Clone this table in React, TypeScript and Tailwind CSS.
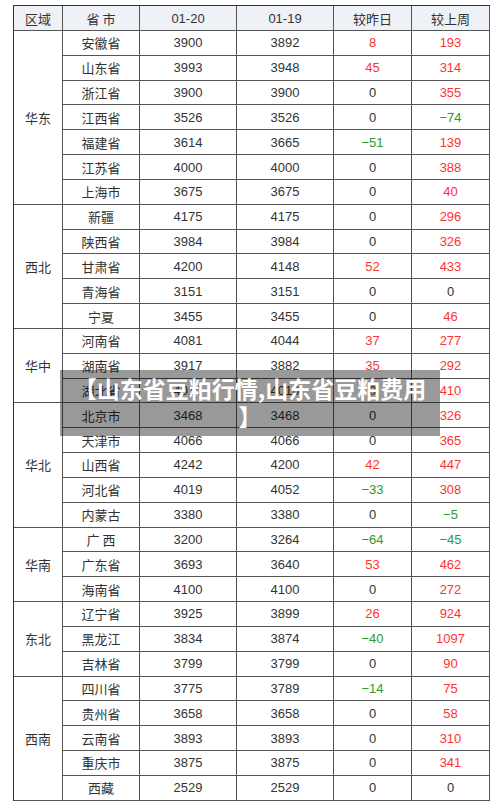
import React from "react";

type Row = [string, string, string, string, string];

const groups: { region: string; rows: Row[] }[] = [
  {
    region: "华东",
    rows: [
      ["安徽省", "3900", "3892", "8", "193"],
      ["山东省", "3993", "3948", "45", "314"],
      ["浙江省", "3900", "3900", "0", "355"],
      ["江西省", "3526", "3526", "0", "-74"],
      ["福建省", "3614", "3665", "-51", "139"],
      ["江苏省", "4000", "4000", "0", "388"],
      ["上海市", "3675", "3675", "0", "40"],
    ],
  },
  {
    region: "西北",
    rows: [
      ["新疆", "4175", "4175", "0", "296"],
      ["陕西省", "3984", "3984", "0", "326"],
      ["甘肃省", "4200", "4148", "52", "433"],
      ["青海省", "3151", "3151", "0", "0"],
      ["宁夏", "3455", "3455", "0", "46"],
    ],
  },
  {
    region: "华中",
    rows: [
      ["河南省", "4081", "4044", "37", "277"],
      ["湖南省", "3917", "3882", "35", "292"],
      ["湖北省", "4010", "4010", "0", "410"],
    ],
  },
  {
    region: "华北",
    rows: [
      ["北京市", "3468", "3468", "0", "326"],
      ["天津市", "4066", "4066", "0", "365"],
      ["山西省", "4242", "4200", "42", "447"],
      ["河北省", "4019", "4052", "-33", "308"],
      ["内蒙古", "3380", "3380", "0", "-5"],
    ],
  },
  {
    region: "华南",
    rows: [
      ["广 西", "3200", "3264", "-64", "-45"],
      ["广东省", "3693", "3640", "53", "462"],
      ["海南省", "4100", "4100", "0", "272"],
    ],
  },
  {
    region: "东北",
    rows: [
      ["辽宁省", "3925", "3899", "26", "924"],
      ["黑龙江", "3834", "3874", "-40", "1097"],
      ["吉林省", "3799", "3799", "0", "90"],
    ],
  },
  {
    region: "西南",
    rows: [
      ["四川省", "3775", "3789", "-14", "75"],
      ["贵州省", "3658", "3658", "0", "58"],
      ["云南省", "3893", "3893", "0", "310"],
      ["重庆市", "3875", "3875", "0", "341"],
      ["西藏", "2529", "2529", "0", "0"],
    ],
  },
];

const spanClass: Record<number, string> = {
  3: "row-span-3",
  5: "row-span-5",
  7: "row-span-7",
};

const cjk = "font-['Noto_Sans_CJK_SC','Noto_Sans',sans-serif]";
const num = "font-['Liberation_Sans','Arial',sans-serif]";
const cell =
  "flex items-center justify-center border-r border-b border-[#555] text-[13px] leading-none";

function colorFor(v: string) {
  if (v === "0") return "text-[#333]";
  if (v.startsWith("-")) return "text-[#2e9a2e]";
  return "text-[#ff3333]";
}

function fmt(v: string) {
  return v.replace("-", "\u2212");
}

export default function App() {
  return (
    <div className="relative w-[500px] h-[807px] bg-white overflow-hidden">
      <div className="ml-[13px] mt-[5px] w-[477px] grid grid-cols-[49px_77px_97px_97px_78px_78px] grid-rows-[25px] auto-rows-[24.84px] border-l border-t border-[#333]">
        {["区域", "省 市", "01-20", "01-19", "较昨日", "较上周"].map((h, i) => (
          <div
            key={h}
            className={`${cell} text-[#333] whitespace-pre bg-[#eef2f6] ${i >= 2 && i <= 3 ? num : cjk}`}
          >
            {h}
          </div>
        ))}
        {groups.map((g) => (
          <React.Fragment key={g.region}>
            <div className={`${cell} text-[#333] ${cjk} ${spanClass[g.rows.length]}`}>
              {g.region}
            </div>
            {g.rows.map((r) => (
              <React.Fragment key={r[0]}>
                <div className={`${cell} text-[#333] ${cjk} whitespace-pre`}>{r[0]}</div>
                <div className={`${cell} text-[#333] ${num}`}>{r[1]}</div>
                <div className={`${cell} text-[#333] ${num}`}>{r[2]}</div>
                <div className={`${cell} ${num} ${colorFor(r[3])}`}>{fmt(r[3])}</div>
                <div className={`${cell} ${num} ${colorFor(r[4])}`}>{fmt(r[4])}</div>
              </React.Fragment>
            ))}
          </React.Fragment>
        ))}
      </div>
      <div
        className={`absolute left-[60px] top-[370px] w-[380px] h-[66px] bg-black/40 pt-[4px] text-center text-white font-bold text-[23px] leading-[28px] whitespace-nowrap ${cjk}`}
      >
        【山东省豆粕行情,山东省豆粕费用
        <br />】
      </div>
    </div>
  );
}
